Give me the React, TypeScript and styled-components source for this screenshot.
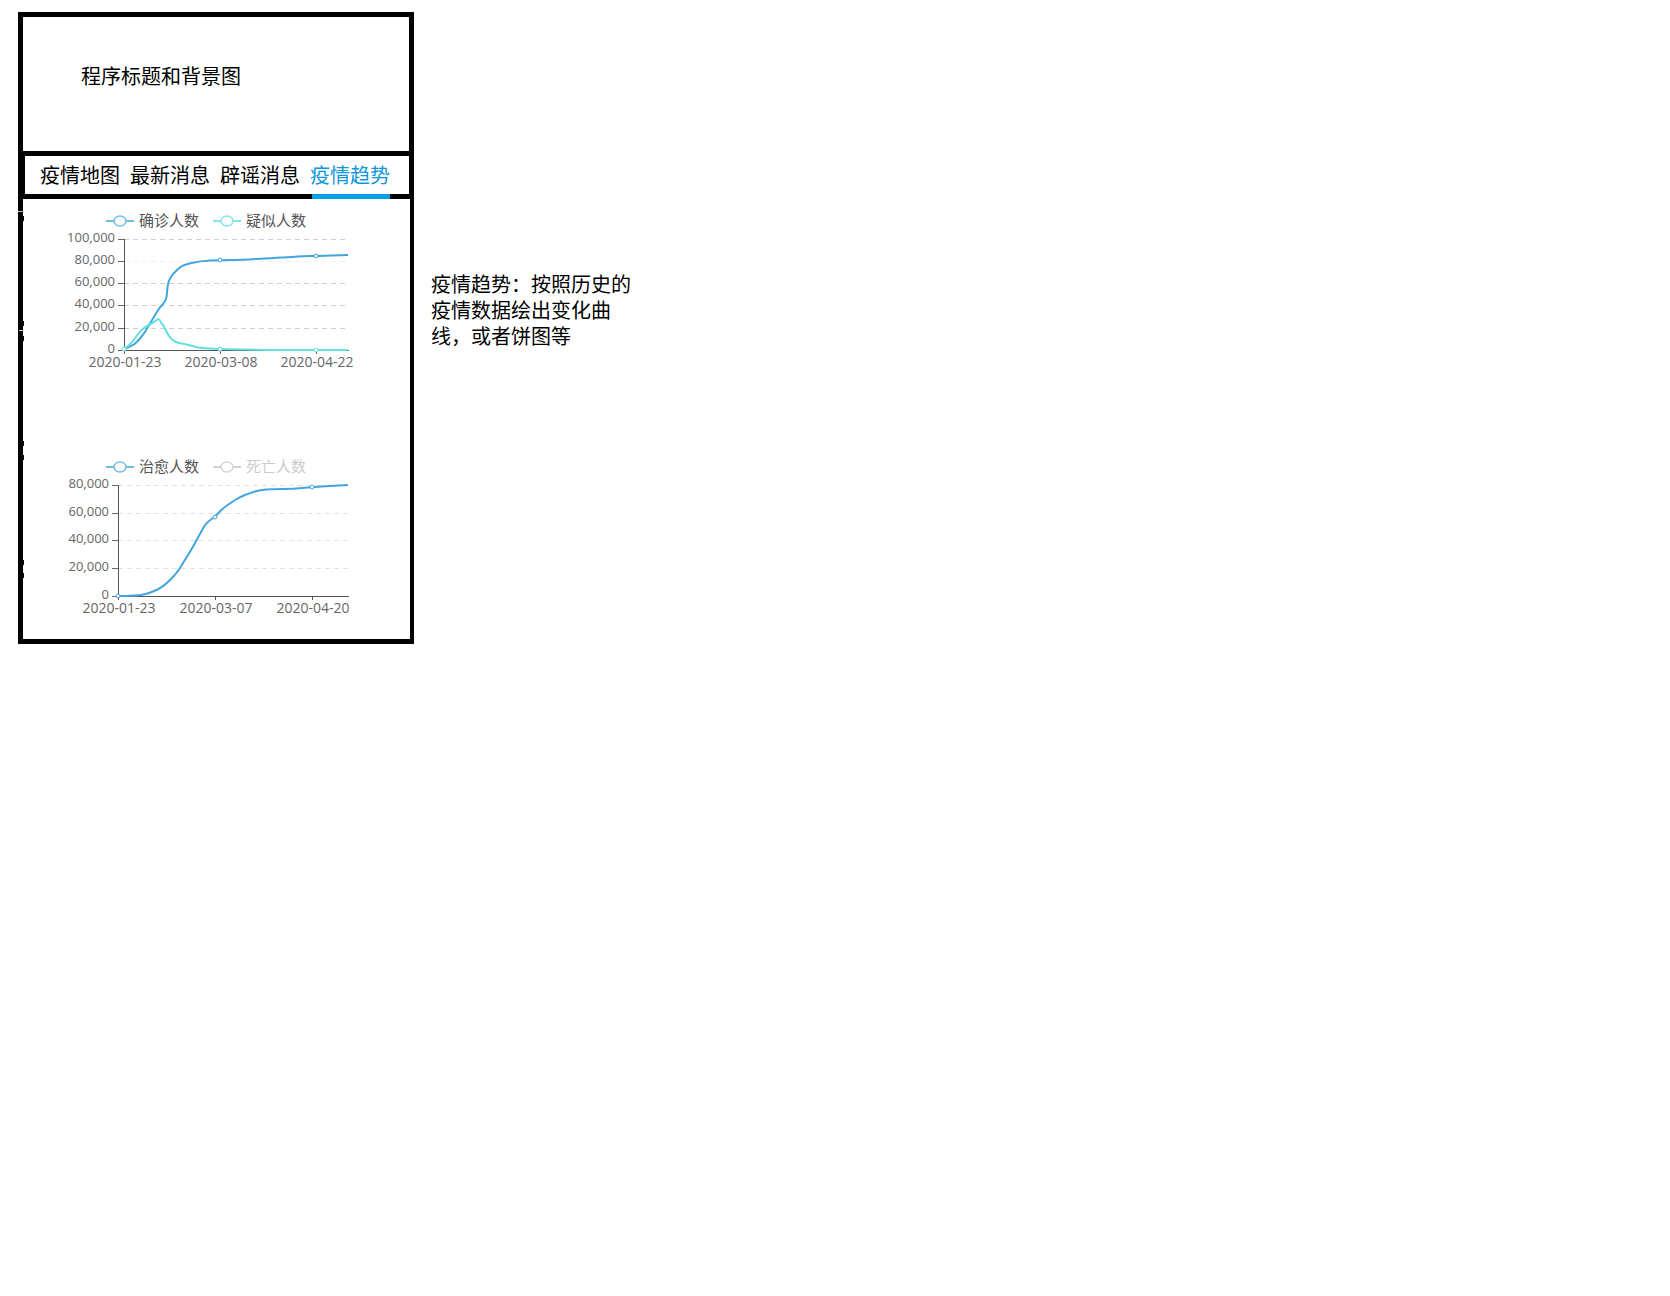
import React from "react";
import styled, { createGlobalStyle } from "styled-components";

const GlobalStyle = createGlobalStyle`
  *, *::before, *::after { box-sizing: border-box; }
  body {
    margin: 0;
    background: #fff;
    color: #000;
    font-family: "Noto Sans CJK SC", sans-serif;
    font-size: 20px;
    line-height: 26px;
  }
`;

const Page = styled.main`
  display: flex;
  align-items: flex-start;
  gap: 17px;
  padding: 12px 18px;
`;

const Frame = styled.section`
  position: relative;
  flex: 0 1 396px;
  border: 5px solid #000;
  border-right-width: 4px;
`;

const Header = styled.header`
  min-height: 134px;
  padding: 46px 58px;
  border-right: 1px solid #000;
`;

const Title = styled.h1`
  margin: 0;
  font-size: 20px;
  font-weight: 400;
  line-height: 26px;
`;

const Tabs = styled.nav`
  display: flex;
  gap: 10px;
  padding-left: 15px;
  border: solid #000;
  border-width: 5px 1px 5px 2px;
`;

const Tab = styled.button<{ $active?: boolean }>`
  position: relative;
  padding: 0;
  border: 0;
  background: none;
  font: inherit;
  line-height: 38px;
  white-space: nowrap;
  cursor: pointer;
  color: ${(p) => (p.$active ? "#1296db" : "#000")};

  &::after {
    content: "";
    display: ${(p) => (p.$active ? "block" : "none")};
    position: absolute;
    top: 100%;
    left: 2px;
    right: 0;
    height: 5px;
    border-radius: 1px;
    background: #00a2e8;
  }
`;

const Note = styled.p`
  flex: 0 1 200px;
  margin: 259px 0 0;
`;

const ChartSvg = styled.svg`
  display: block;
  width: 100%;
  height: auto;
`;

const AxisLabel = styled.text<{ $size: number }>`
  font-family: "Open Sans", sans-serif;
  font-size: ${(p) => p.$size}px;
  fill: #666;
`;

const LegendLabel = styled.text`
  font-family: "Noto Sans CJK SC", sans-serif;
  font-size: 15px;
`;

const EdgeMarks = styled.svg`
  position: absolute;
  top: 0;
  left: -5px;
  width: 7px;
  height: 100%;
`;

type Point = [number, number];
type Series = { color: string; points: Point[]; markers: Point[] };
type ChartData = {
  label: string;
  left: number;
  legendY: number;
  legend: { name: string; color: string; text: string }[];
  rows: { y: number; text: string; faint?: boolean }[];
  columns: { x: number; text: string }[];
  gridColor: string;
  series: Series[];
};

const BLUE = "#41a5de";
const TEAL = "#62dfe0";
const RIGHT = 325;

const charts: ChartData[] = [
  {
    label: "确诊人数和疑似人数",
    left: 101,
    legendY: 22,
    legend: [
      { name: "确诊人数", color: "#6fbbe8", text: "#555" },
      { name: "疑似人数", color: "#83e5e6", text: "#555" },
    ],
    rows: [
      { y: 40, text: "100,000" },
      { y: 62, text: "80,000", faint: true },
      { y: 84, text: "60,000" },
      { y: 106, text: "40,000" },
      { y: 129, text: "20,000" },
      { y: 151, text: "0" },
    ],
    columns: [
      { x: 101, text: "2020-01-23" },
      { x: 197, text: "2020-03-08" },
      { x: 293, text: "2020-04-22" },
    ],
    gridColor: "#cfcfcf",
    series: [
      {
        color: BLUE,
        points: [
          [101, 150], [109, 147], [114, 143], [120, 136], [125, 128], [132, 116],
          [137, 108], [143, 102], [144, 94], [145, 83], [149, 76], [155, 70],
          [160, 66], [177, 62], [197, 61], [219, 61], [249, 59], [270, 58],
          [280, 57], [293, 57], [325, 56],
        ],
        markers: [[197, 61], [293, 57]],
      },
      {
        color: TEAL,
        points: [
          [101, 150], [107, 146], [112, 139], [119, 130], [124, 127], [130, 124],
          [136, 119], [138, 124], [141, 127], [144, 134], [149, 141], [155, 144],
          [162, 145], [169, 147], [177, 149], [197, 150], [250, 151], [325, 151],
        ],
        markers: [[101, 150], [197, 150], [293, 151]],
      },
    ],
  },
  {
    label: "治愈人数和死亡人数",
    left: 95,
    legendY: 48,
    legend: [
      { name: "治愈人数", color: "#6fbbe8", text: "#555" },
      { name: "死亡人数", color: "#d4d4d4", text: "#ccc" },
    ],
    rows: [
      { y: 66, text: "80,000" },
      { y: 94, text: "60,000" },
      { y: 121, text: "40,000" },
      { y: 149, text: "20,000" },
      { y: 177, text: "0" },
    ],
    columns: [
      { x: 95, text: "2020-01-23" },
      { x: 192, text: "2020-03-07" },
      { x: 289, text: "2020-04-20" },
    ],
    gridColor: "#e2e2e2",
    series: [
      {
        color: BLUE,
        points: [
          [95, 177], [114, 177], [127, 174], [140, 168], [154, 154], [160, 144],
          [170, 128], [179, 111], [184, 103], [192, 98], [199, 90], [209, 83],
          [217, 78], [227, 74], [237, 71], [250, 70], [270, 70], [289, 68],
          [325, 66],
        ],
        markers: [[95, 177], [192, 98], [289, 68]],
      },
    ],
  },
];

// Joins the samples with curves through the midpoints of neighbouring samples.
function smoothPath(points: Point[]): string {
  const [first, ...rest] = points;
  let d = `M${first[0]} ${first[1]}`;
  rest.forEach(([x, y], i) => {
    const next = rest[i + 1];
    d += next
      ? ` Q${x} ${y} ${(x + next[0]) / 2} ${(y + next[1]) / 2}`
      : ` L${x} ${y}`;
  });
  return d;
}

function TrendChart({ data }: { data: ChartData }) {
  const top = data.rows[0].y;
  const bottom = data.rows[data.rows.length - 1].y;
  return (
    <ChartSvg viewBox="0 0 387 220" role="img" aria-label={data.label}>
      {data.legend.map((item, i) => {
        const x = 97 + i * 107;
        return (
          <g key={item.name}>
            <path d={`M${x - 14} ${data.legendY}h28`} stroke={item.color} strokeWidth="2" />
            <ellipse cx={x} cy={data.legendY} rx="6" ry="5" fill="#fff" stroke={item.color} strokeWidth="1.5" />
            <LegendLabel x={x + 19} y={data.legendY + 5} fill={item.text}>
              {item.name}
            </LegendLabel>
          </g>
        );
      })}
      {data.rows.map((row) => (
        <g key={row.text}>
          {row.y !== bottom && (
            <path
              d={`M${data.left} ${row.y + 0.5}H${RIGHT}`}
              stroke={row.faint ? "#f1f1f1" : data.gridColor}
              strokeDasharray="5 4"
            />
          )}
          <path d={`M${data.left - 6} ${row.y + 0.5}h6`} stroke="#666" />
          <AxisLabel $size={13} x={data.left - 9} y={row.y + 3} textAnchor="end">
            {row.text}
          </AxisLabel>
        </g>
      ))}
      <path
        d={`M${data.left + 0.5} ${top}V${bottom + 0.5}H${RIGHT + 1}`}
        fill="none"
        stroke="#555"
      />
      {data.columns.map((column) => (
        <g key={column.text}>
          <path d={`M${column.x + 0.5} ${bottom}v4`} stroke="#555" />
          <AxisLabel $size={14} x={column.x + 1} y={bottom + 17} textAnchor="middle">
            {column.text}
          </AxisLabel>
        </g>
      ))}
      {data.series.map((series) => (
        <g key={series.color} fill="none" stroke={series.color}>
          <path d={smoothPath(series.points)} strokeWidth="2" strokeLinejoin="round" />
          {series.markers.map(([x, y]) => (
            <circle key={x} cx={x} cy={y} r="2" fill="#fff" strokeWidth="1" />
          ))}
        </g>
      ))}
    </ChartSvg>
  );
}

const tabs = ["疫情地图", "最新消息", "辟谣消息", "疫情趋势"];

export default function App() {
  const [active, setActive] = React.useState("疫情趋势");
  return (
    <>
      <GlobalStyle />
      <Page>
        <Frame>
          <Header>
            <Title>程序标题和背景图</Title>
          </Header>
          <Tabs>
            {tabs.map((tab) => (
              <Tab key={tab} type="button" $active={tab === active} onClick={() => setActive(tab)}>
                {tab}
              </Tab>
            ))}
          </Tabs>
          {charts.map((chart) => (
            <TrendChart key={chart.label} data={chart} />
          ))}
          <EdgeMarks aria-hidden="true">
            {[199, 304, 319, 424, 438, 543, 556].map((y) => (
              <rect key={y} x="5" y={y} width="1" height="5" />
            ))}
            <path d="M0 194.5h6M1 313.5h5" stroke="#c3c3c3" />
          </EdgeMarks>
        </Frame>
        <Note>疫情趋势：按照历史的疫情数据绘出变化曲线，或者饼图等</Note>
      </Page>
    </>
  );
}
